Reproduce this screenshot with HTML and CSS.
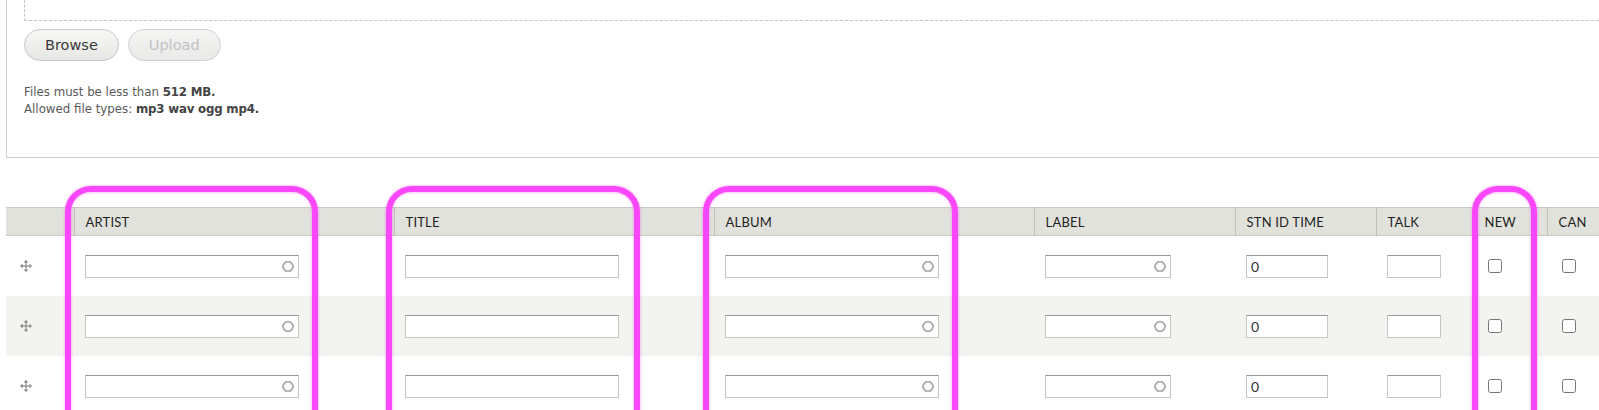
FILE: index.html
```html
<!DOCTYPE html>
<html>
<head>
<meta charset="utf-8">
<link rel="stylesheet" href="styles.css">
</head>
<body>
<div class="fieldset">
  <div class="dropzone"></div>
  <div class="buttons">
    <button class="btn">Browse</button>
    <button class="btn" disabled>Upload</button>
  </div>
  <div class="desc">
    <div>Files must be less than <strong>512 MB.</strong></div>
    <div>Allowed file types: <strong>mp3 wav ogg mp4.</strong></div>
  </div>
</div>

<div class="table-wrap">
  <table class="tracks">
    <colgroup>
      <col class="c-drag"><col class="c-wide"><col class="c-wide"><col class="c-wide">
      <col class="c-label"><col class="c-stn"><col class="c-talk"><col class="c-new"><col class="c-can">
    </colgroup>
    <thead>
      <tr>
        <th class="first"></th><th>Artist</th><th>Title</th><th>Album</th><th>Label</th><th>Stn ID Time</th><th>Talk</th><th>New</th><th>Can</th>
      </tr>
    </thead>
    <tbody>
      <tr>
        <td class="drag"><svg class="handle" width="12" height="12" viewBox="0 0 12 12"><path d="M5.5 2h1v8h-1zM2 5.5h8v1H2z M6 0 8.2 2.6H3.8z M6 12 8.2 9.4H3.8z M0 6 2.6 3.8v4.4z M12 6 9.4 3.8v4.4z" fill="#7b7b7b"/></svg></td>
        <td><input class="txt auto w-wide" type="text"></td>
        <td><input class="txt w-wide" type="text"></td>
        <td><input class="txt auto w-wide" type="text"></td>
        <td><input class="txt auto w-label" type="text"></td>
        <td><input class="txt w-stn" type="text" value="0"></td>
        <td><input class="txt w-talk" type="text"></td>
        <td class="chk"><input type="checkbox"></td>
        <td class="chk"><input type="checkbox"></td>
      </tr>
      <tr class="even">
        <td class="drag"><svg class="handle" width="12" height="12" viewBox="0 0 12 12"><path d="M5.5 2h1v8h-1zM2 5.5h8v1H2z M6 0 8.2 2.6H3.8z M6 12 8.2 9.4H3.8z M0 6 2.6 3.8v4.4z M12 6 9.4 3.8v4.4z" fill="#7b7b7b"/></svg></td>
        <td><input class="txt auto w-wide" type="text"></td>
        <td><input class="txt w-wide" type="text"></td>
        <td><input class="txt auto w-wide" type="text"></td>
        <td><input class="txt auto w-label" type="text"></td>
        <td><input class="txt w-stn" type="text" value="0"></td>
        <td><input class="txt w-talk" type="text"></td>
        <td class="chk"><input type="checkbox"></td>
        <td class="chk"><input type="checkbox"></td>
      </tr>
      <tr>
        <td class="drag"><svg class="handle" width="12" height="12" viewBox="0 0 12 12"><path d="M5.5 2h1v8h-1zM2 5.5h8v1H2z M6 0 8.2 2.6H3.8z M6 12 8.2 9.4H3.8z M0 6 2.6 3.8v4.4z M12 6 9.4 3.8v4.4z" fill="#7b7b7b"/></svg></td>
        <td><input class="txt auto w-wide" type="text"></td>
        <td><input class="txt w-wide" type="text"></td>
        <td><input class="txt auto w-wide" type="text"></td>
        <td><input class="txt auto w-label" type="text"></td>
        <td><input class="txt w-stn" type="text" value="0"></td>
        <td><input class="txt w-talk" type="text"></td>
        <td class="chk"><input type="checkbox"></td>
        <td class="chk"><input type="checkbox"></td>
      </tr>
    </tbody>
  </table>
  <div class="mark mark-artist"></div>
  <div class="mark mark-title"></div>
  <div class="mark mark-album"></div>
  <div class="mark mark-new"></div>
</div>
</body>
</html>
```

FILE: styles.css
```css
html, body {
  margin: 0;
  padding: 0;
  overflow: hidden;
  background: #fff;
}
body {
  font-family: "DejaVu Sans", Verdana, sans-serif;
  color: #333;
  width: 1599px;
  height: 410px;
}

.fieldset {
  margin-left: 6px;
  width: 1700px;
  border-left: 1px solid #cccccc;
  border-bottom: 1px solid #cccccc;
  padding: 0 0 39px 17px;
}
.dropzone {
  height: 20px;
  border-left: 1px dashed #c4c4c4;
  border-bottom: 1px dashed #c4c4c4;
}
.buttons {
  display: flex;
  gap: 9px;
  margin-top: 8px;
}
.btn {
  height: 32px;
  padding: 0 20px;
  border: 1px solid #c8c8c6;
  border-radius: 16px;
  background: linear-gradient(#f7f7f6, #e6e6e4);
  font-family: "DejaVu Sans", Verdana, sans-serif;
  font-size: 14.5px;
  color: #3a3a3a;
}
.btn:disabled {
  color: #c3c3c3;
  background: linear-gradient(#f4f4f3, #e9e9e7);
  border-color: #d2d2d0;
}
.desc {
  margin-top: 23px;
  font-size: 11.8px;
  line-height: 17px;
  color: #5a5a5a;
}
.desc strong {
  color: #444;
  font-weight: bold;
  letter-spacing: -0.2px;
}

.table-wrap {
  position: relative;
  margin-top: 49px;
  margin-left: 6px;
}
.tracks {
  border-collapse: collapse;
  table-layout: fixed;
  width: 1620px;
  font-family: Lato, "Open Sans", sans-serif;
}
.c-drag { width: 68px; }
.c-wide { width: 320px; }
.c-label { width: 201px; }
.c-stn { width: 141px; }
.c-talk { width: 97px; }
.c-new { width: 74px; }
.c-can { width: 79px; }

.tracks thead tr {
  background: #e1e2dc;
  border-top: 1px solid #c9cac4;
  border-bottom: 1px solid #c9cac4;
}
.tracks th {
  height: 27px;
  padding: 0 11px;
  text-align: left;
  font-weight: normal;
  font-size: 13px;
  text-transform: uppercase;
  color: #1f1f1f;
  border-left: 1px solid #bfc0ba;
  letter-spacing: 0.2px;
}
.tracks th.first { border-left: none; }
.tracks td {
  height: 60px;
  padding: 0 11px;
  vertical-align: middle;
}
.tracks tbody tr { background: #fff; }
.tracks tbody tr.even { background: #f3f4ef; }
.tracks td.drag { padding-left: 14px; }
.handle { display: block; }

.txt {
  box-sizing: border-box;
  height: 23px;
  border: 1px solid #c6c6c6;
  border-top-color: #9a9a9a;
  padding: 0 4px;
  font-family: Lato, "Open Sans", sans-serif;
  font-size: 14px;
  color: #333;
  background: #fff;
  display: block;
  outline: none;
}
.txt.auto {
  background: radial-gradient(circle at calc(100% - 10px) 50%, transparent 3.6px, #b3b3b3 4.1px, #b3b3b3 5.6px, transparent 6.1px) #fff;
}
.w-wide { width: 214px; }
.w-label { width: 126px; }
.w-stn { width: 82px; }
.w-talk { width: 54px; }

.tracks td.chk { padding-left: 12px; }
.tracks td.chk input {
  margin: 0 0 0 3px;
  width: 14px;
  height: 14px;
  display: block;
}

.mark {
  position: absolute;
  top: -21px;
  height: 320px;
  box-sizing: border-box;
  border: 6px solid #fb47fb;
  border-radius: 26px;
  box-shadow: 0 0 3px rgba(250, 60, 250, 0.55), inset 0 0 3px rgba(250, 60, 250, 0.55);
  pointer-events: none;
}
.mark-artist { left: 59px; width: 253px; }
.mark-title { left: 380px; width: 254px; }
.mark-album { left: 697px; width: 255px; }
.mark-new { left: 1466px; width: 65px; }
```
